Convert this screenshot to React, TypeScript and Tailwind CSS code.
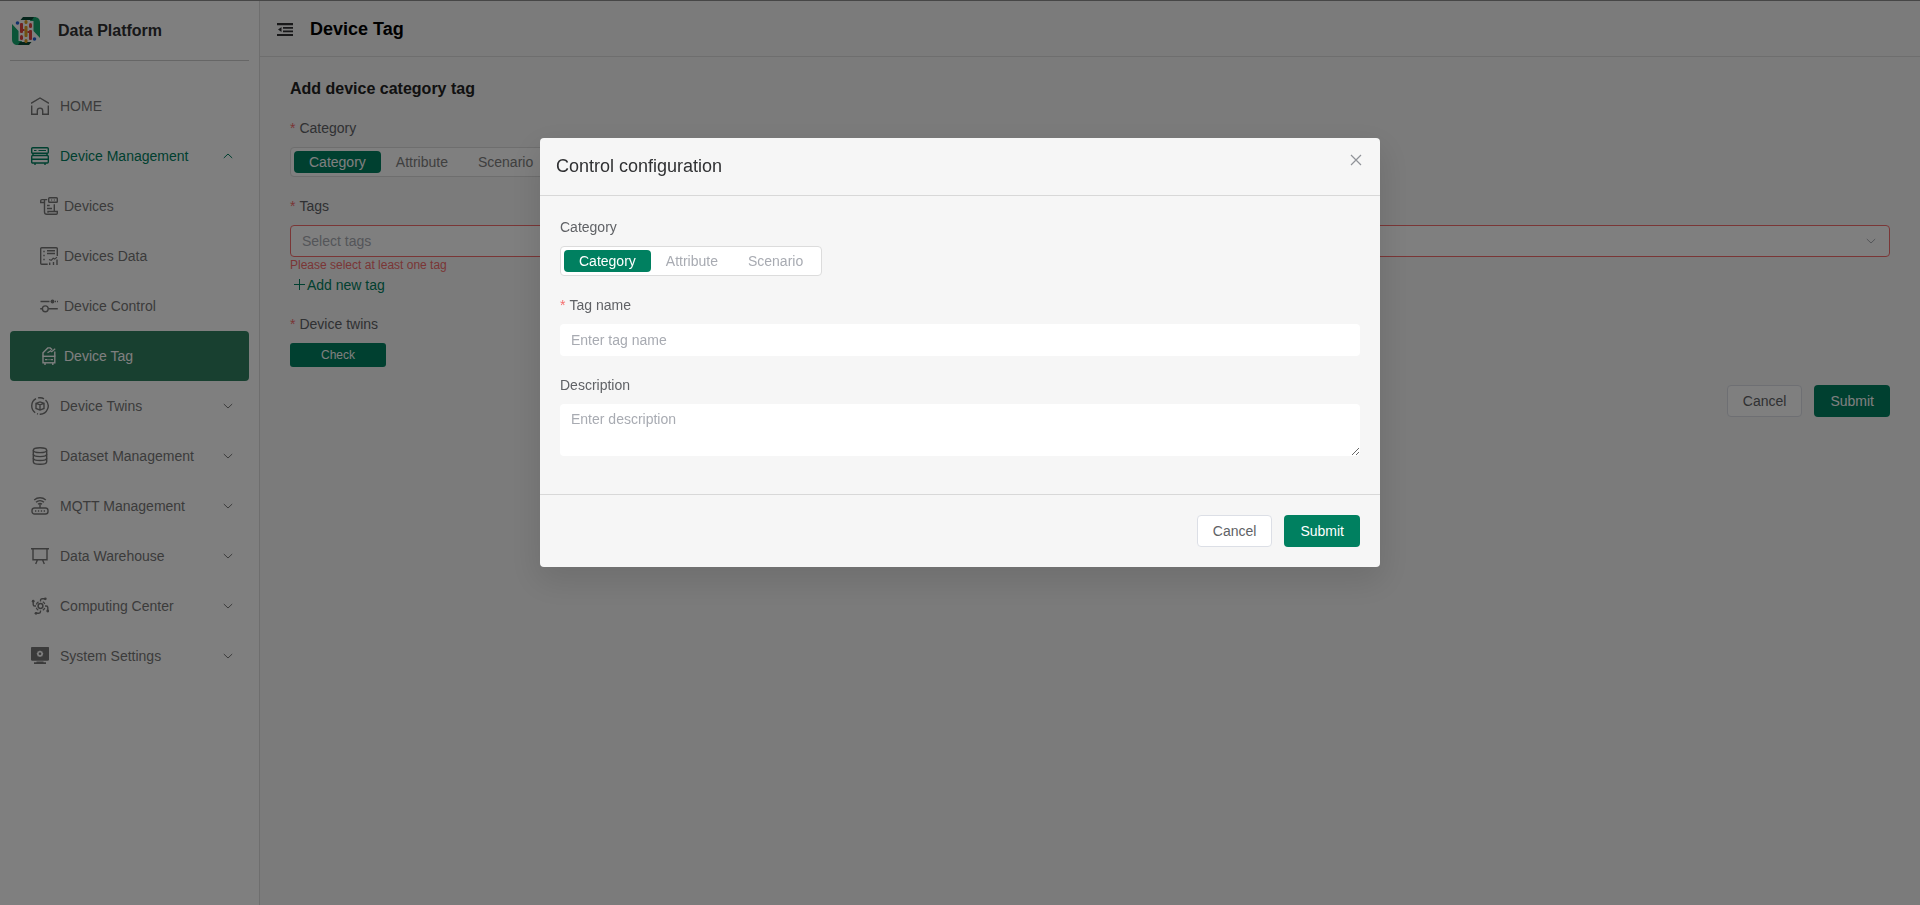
import { useState } from "react";
import type { ReactNode } from "react";

const categories = ["Category", "Attribute", "Scenario"];

type MenuItem = {
    title: string
    icon: ReactNode
    arrow?: "up" | "down"
    sub?: boolean
    active?: boolean
    open?: boolean
}

/***************** Icons ************/
const Icon = ({ children }: { children: ReactNode }) => (
    <svg className="size-[18px] shrink-0" viewBox="0 0 18 18" fill="none" stroke="currentColor" strokeWidth="1.4" aria-hidden="true">
        {children}
    </svg>
)

const HomeIcon = () => (
    <Icon>
        <path d="M0 6.300 9 1l9 5.300" />
        <path d="M.7 8.500v8.800h5.600v-3.500a2.700 2.700 0 0 1 5.400 0v3.500h5.600V8.500" />
    </Icon>
)

const ServerIcon = () => (
    <Icon>
        <rect x=".7" y=".7" width="16.600" height="5.600" rx="1" />
        <path d="M3 3.500h2.500M7.500 3.500H15" strokeWidth="1.200" />
        <rect x=".7" y="8.500" width="16.600" height="7.500" rx="1" />
        <path d="M2 6.500v2M16 6.500v2M1 12.300h16M4 16v2M14 16v2" />
    </Icon>
)

const DevicesIcon = () => (
    <Icon>
        <path d="M4.500 5.500H.7V3.800c0-.7.500-1.200 1.200-1.200h5.300M4.500 3v12c0 1.300 1 2.300 2.300 2.300h9.500c.6 0 1-.4 1-1v-1.800H8v1.200" />
        <rect x="8.700" y=".7" width="8.600" height="4.600" rx=".8" />
        <path d="M11 3h1.200M13.800 3H15" strokeWidth="1.100" />
        <path d="M14.300 7.300v7M7 8.500h2.700M7 11.500h5" />
    </Icon>
)

const DataIcon = () => (
    <Icon>
        <path d="M17.300 9V1.700a1 1 0 0 0-1-1H1.700a1 1 0 0 0-1 1v14.600a1 1 0 0 0 1 1h6" />
        <path d="M3.300 4.500h1.400M3.300 8.500h1.400M3.300 12.500h1.400M7 3.800h8M7 6.500h8" />
        <path d="m9 12.500 2.200.8 2-2 1.500.8 2.300-2" strokeWidth="1.200" />
        <path d="M9.700 15.500V18M13.500 15V18M17 12.500V18" />
    </Icon>
)

const ControlIcon = () => (
    <Icon>
        <path d="M.5 4.500h9M15 4.500h1M17 4.500h1" />
        <circle cx="12.500" cy="4.500" r="2" fill="currentColor" stroke="none" />
        <circle cx="5.300" cy="11.800" r="2.900" />
        <path d="M.2 11.800h2.200M8.200 11.800h9.600" />
    </Icon>
)

const TagIcon = () => (
    <Icon>
        <path d="M3 9.500V5.800L7.800.9h2.400l2 1.800M14.800 9.500V4.500" />
        <path d="m7.500 5.800 3.200-2 1 1 3.500-3" strokeWidth="1.200" />
        <rect x="3" y="9.300" width="11.800" height="6.500" />
        <path d="M5 12.600h2.500M8.500 12.600h1M10.500 12.600H13M5 16v2M12.800 16v2" />
    </Icon>
)

const TwinsIcon = () => (
    <Icon>
        <path d="M5 1.700a8.300 8.300 0 0 0-.8 14M7 .9a8.300 8.300 0 0 1 6 .9M14.500 2.900a8.300 8.300 0 0 1-5.800 14.400M6 16.700l1 .4" />
        <path d="M5 6.300 9 4.900l4 1.400v5.200l-4 1.600-4-1.600zM5 6.300 9 7.800l4-1.500M9 7.800v5.300" />
    </Icon>
)

const DatasetIcon = () => (
    <Icon>
        <ellipse cx="9" cy="3.200" rx="6.700" ry="2.400" />
        <path d="M2.300 3.200v11.500c0 1.500 3 2.600 6.700 2.600s6.700-1.100 6.700-2.600V3.200" />
        <path d="M2.300 7c0 1.500 3 2.600 6.700 2.600S15.700 8.500 15.700 7M2.300 10.900c0 1.500 3 2.600 6.700 2.600s6.700-1.100 6.700-2.600" />
    </Icon>
)

const MqttIcon = () => (
    <Icon>
        <path d="M3.200 3a8.800 8.800 0 0 1 11.600 0M5 5.200a6 6 0 0 1 8 0M7 7.300a3 3 0 0 1 4 0M9 7.500V11" />
        <rect x="1" y="11" width="16" height="6" rx="2.500" />
        <path d="M4 14h1.300M6.900 14h1.300M9.800 14h1.300M12.700 14H14" strokeWidth="1.600" />
    </Icon>
)

const WarehouseIcon = () => (
    <Icon>
        <path d="M0 1.700h18M2 1.700v11h14v-11M6.500 12.700 4.700 17M11.500 12.700l1.800 4.300" />
    </Icon>
)

const ComputingIcon = () => (
    <Icon>
        <circle cx="9.500" cy="9" r="2.400" strokeWidth="1.500" />
        <path d="M9.500 4.500V3.400c0-1 .6-1.600 1.600-1.600h3M14 9h1.200c1 0 1.600.6 1.600 1.600v3M9.500 13.500v1.100c0 1-.6 1.600-1.600 1.600h-3M5 9H3.800c-1 0-1.600-.6-1.600-1.600v-3" />
        <path d="M5.200 7.400A5 5 0 0 1 7.500 4.900M11.800 4.800A5 5 0 0 1 13.800 7M13.800 11a5 5 0 0 1-2 2.200M7.300 13.200a5 5 0 0 1-2.100-2.500" strokeWidth="1.200" />
        <g fill="currentColor" stroke="none">
            <circle cx="14.300" cy="1.800" r="1.400" />
            <circle cx="16.700" cy="14" r="1.400" />
            <circle cx="5" cy="16.300" r="1.400" />
            <circle cx="2.200" cy="4.200" r="1.400" />
        </g>
    </Icon>
)

const SystemIcon = () => (
    <Icon>
        <path d="M1.500.5h15a1 1 0 0 1 1 1V12a1 1 0 0 1-1 1h-15a1 1 0 0 1-1-1V1.500a1 1 0 0 1 1-1z" fill="currentColor" />
        <path d="m9 3.600 1.100.6 1.300.2.200 1.300.8 1.100-.8 1.100-.2 1.300-1.300.2-1.100.6-1.100-.6-1.300-.2-.2-1.300-.8-1.100.8-1.100.2-1.300 1.300-.2z" fill="white" stroke="none" />
        <circle cx="9" cy="6.800" r="1.300" fill="currentColor" stroke="none" />
        <path d="M5.500 14.500h7v.8H15V17H3v-1.700h2.500z" fill="currentColor" stroke="none" />
    </Icon>
)

const Arrow = ({ up }: { up?: boolean }) => (
    <svg className="size-[14px] shrink-0" viewBox="0 0 14 14" fill="none" stroke="currentColor" aria-hidden="true">
        <path d={up ? "m2.800 9 4.200-4 4.200 4" : "m2.800 5 4.200 4 4.200-4"} />
    </svg>
)

const Logo = () => (
    <svg className="size-[30px] shrink-0" viewBox="0 0 30 30" aria-hidden="true">
        <path d="M20 1h3c4 0 6 2 6 6v15l-6.500-7V5H19z" fill="#16a870" />
        <path d="M10 29H7c-4 0-6-2-6-6V8l6.500 7v10H11z" fill="#16a870" />
        <path d="M12 1h11l-2 3H9.500zM18 29H7l2-3h11.500z" fill="#0b4a36" />
        <g fill="#e0453f">
            <rect x="9" y="7" width="3" height="10" rx="1" />
            <rect x="9" y="19" width="3" height="5" rx="1.500" />
            <rect x="18" y="7" width="3" height="5" rx="1.500" />
            <rect x="18" y="14" width="3" height="10" rx="1" />
        </g>
        <g fill="#e0a020">
            <rect x="13.500" y="4" width="3" height="4" rx="1.500" />
            <rect x="13.500" y="10" width="3" height="11" rx="1" />
            <rect x="13.500" y="23" width="3" height="4" rx="1.500" />
        </g>
        <path d="M12 13h1.500v2H12zM16.500 15H18v2h-1.500z" fill="#e0453f" />
        <circle cx="6.500" cy="7" r="1.800" fill="#2563d9" />
        <circle cx="23.500" cy="23" r="1.800" fill="#2563d9" />
    </svg>
)

const menu: MenuItem[] = [
    { title: "HOME", icon: <HomeIcon /> },
    { title: "Device Management", icon: <ServerIcon />, arrow: "up", open: true },
    { title: "Devices", icon: <DevicesIcon />, sub: true },
    { title: "Devices Data", icon: <DataIcon />, sub: true },
    { title: "Device Control", icon: <ControlIcon />, sub: true },
    { title: "Device Tag", icon: <TagIcon />, sub: true, active: true },
    { title: "Device Twins", icon: <TwinsIcon />, arrow: "down" },
    { title: "Dataset Management", icon: <DatasetIcon />, arrow: "down" },
    { title: "MQTT Management", icon: <MqttIcon />, arrow: "down" },
    { title: "Data Warehouse", icon: <WarehouseIcon />, arrow: "down" },
    { title: "Computing Center", icon: <ComputingIcon />, arrow: "down" },
    { title: "System Settings", icon: <SystemIcon />, arrow: "down" },
]

const MenuLink = ({ item }: { item: MenuItem }) => {
    const color = item.active ? "bg-[#308060] text-white" : item.open ? "text-[#008060]" : "text-[#777777]"
    return (
        <a href="#" className={`flex h-[50px] items-center rounded pr-3.5 ${item.sub ? "gap-1.5 pl-[30px]" : "gap-[11px] pl-[21px]"} ${color}`}>
            {item.icon}
            <span className="flex-1">{item.title}</span>
            {item.arrow && <Arrow up={item.arrow === "up"} />}
        </a>
    )
}

const Required = () => <span className="mr-1 text-[#f56c6c]">*</span>

/***************** Segmented buttons ************/
const Segmented = ({ label, muted }: { label: string, muted?: boolean }) => {
    const [value, setValue] = useState(categories[0])
    return (
        <div role="group" aria-label={label} className="flex h-[30px] w-fit items-center rounded border border-[#dcdcdc] bg-white px-[3px]">
            {categories.map((c) => (
                <button
                    key={c}
                    type="button"
                    onClick={() => setValue(c)}
                    className={`h-[22px] rounded px-[15px] leading-[22px] ${value === c ? "bg-[#008060] text-white" : muted ? "text-[#a8abb2]" : "text-[#808080]"}`}
                >
                    {c}
                </button>
            ))}
        </div>
    )
}

const FormButtons = () => (
    <div className="flex justify-end gap-3">
        <button type="button" className="h-8 rounded border border-[#dcdfe6] bg-white px-[15px] text-[#606266]">Cancel</button>
        <button type="submit" className="h-8 rounded bg-[#008060] px-4 text-white">Submit</button>
    </div>
)

const Dialog = () => (
    <div className="fixed inset-0 z-10 flex items-start justify-center bg-black/50 pt-[138px]">
        <form
            role="dialog"
            aria-labelledby="dialog-title"
            onSubmit={(e) => e.preventDefault()}
            className="w-full max-w-[840px] rounded bg-[#f6f6f6] shadow-[0_12px_32px_4px_rgba(0,0,0,0.1)]"
        >
            <div className="flex h-[58px] items-start justify-between border-b border-[#d8d8d8] px-4">
                <h2 id="dialog-title" className="pt-4 text-lg leading-6 text-[#303133]">Control configuration</h2>
                <button type="button" aria-label="Close" className="mt-3.5 text-[#909399]">
                    <svg className="size-4" viewBox="0 0 16 16" stroke="currentColor" strokeWidth="1.200" aria-hidden="true">
                        <path d="m3 3 10 10M13 3 3 13" />
                    </svg>
                </button>
            </div>

            <div className="px-5 pt-5 pb-[38px]">
                <p className="mb-2 leading-[22px]">Category</p>
                <Segmented label="Tag category" muted />
                <label htmlFor="tag-name" className="mt-[18px] mb-2 block leading-[22px]"><Required />Tag name</label>
                <input id="tag-name" type="text" placeholder="Enter tag name" className="block h-8 w-full rounded bg-white px-[11px] placeholder:text-[#a8abb2]" />
                <label htmlFor="description" className="mt-[18px] mb-2 block leading-[22px]">Description</label>
                <textarea id="description" placeholder="Enter description" className="block h-[52px] w-full resize-y rounded bg-white px-[11px] py-[5px] leading-[21px] placeholder:text-[#a8abb2]" />
            </div>

            <div className="border-t border-[#d8d8d8] p-5">
                <FormButtons />
            </div>
        </form>
    </div>
)

export default function App() {
    return (
        <div className="flex min-h-screen border-t border-[#8c8c8c] bg-[#f6f6f6] font-['Liberation_Sans',Arial,sans-serif] text-sm text-[#606266]">
            <aside className="w-[260px] shrink-0 border-r border-[#dcdcdc] bg-white px-2.5">
                <div className="flex h-[60px] items-center gap-[17px] border-b border-[#cccccc] pl-px">
                    <Logo />
                    <span className="text-base font-bold text-[#303133]">Data Platform</span>
                </div>
                <nav className="mt-5">
                    {menu.map((item) => (
                        <MenuLink key={item.title} item={item} />
                    ))}
                </nav>
            </aside>

            <main className="min-w-0 flex-1">
                <header className="flex h-14 items-center gap-[15px] border-b border-[#dcdcdc] px-[15px]">
                    <button type="button" aria-label="Collapse menu" className="text-[#303133]">
                        <svg className="size-5" viewBox="0 0 20 20" fill="currentColor" aria-hidden="true">
                            <path d="M2 4h16v2.300H2zM8 8h10v1.700H8zM8 11.600h10v1.700H8zM2 15h16v2H2zM6.500 8v5L3 10.500z" />
                        </svg>
                    </button>
                    <h1 className="text-lg font-bold text-black">Device Tag</h1>
                </header>

                <form onSubmit={(e) => e.preventDefault()} className="px-[30px] pt-5">
                    <h2 className="text-base leading-6 font-bold text-[#222222]">Add device category tag</h2>
                    <p className="mt-4 mb-2 leading-[22px]"><Required />Category</p>
                    <Segmented label="Category" />

                    <label htmlFor="tags" className="mt-[18px] mb-2 block leading-[22px]"><Required />Tags</label>
                    <div className="relative">
                        <select id="tags" defaultValue="" className="block h-8 w-full appearance-none rounded border border-[#f56c6c] bg-white px-[11px] text-[#a8abb2]">
                            <option value="">Select tags</option>
                        </select>
                        <span className="pointer-events-none absolute inset-y-0 right-3 flex items-center text-[#a8abb2]">
                            <Arrow />
                        </span>
                    </div>
                    <p className="text-xs leading-4 text-[#f56c6c]">Please select at least one tag</p>
                    <button type="button" className="flex items-center pl-[3px] leading-6 text-[#008060]">
                        <svg className="size-[14px]" viewBox="0 0 14 14" stroke="currentColor" aria-hidden="true">
                            <path d="M6.500 1v11M1 6.500h11" />
                        </svg>
                        Add new tag
                    </button>

                    <p className="mt-4 mb-2 leading-[22px]"><Required />Device twins</p>
                    <button type="button" className="block h-6 w-24 rounded-[3px] bg-[#008060] text-xs text-white">Check</button>
                    <div className="mt-[18px]">
                        <FormButtons />
                    </div>
                </form>
            </main>

            <Dialog />
        </div>
    )
}
